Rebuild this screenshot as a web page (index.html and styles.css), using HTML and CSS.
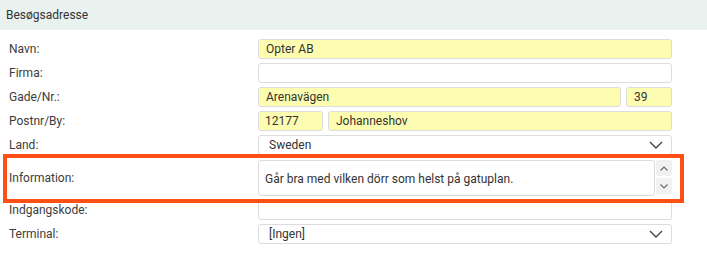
FILE: index.html
```html
<!DOCTYPE html>
<html lang="da">
<head>
    <meta charset="UTF-8">
    <title>Besøgsadresse</title>
    <link rel="stylesheet" href="styles.css">
</head>
<body>
    <div class="panel">
        <div class="panel-head">Besøgsadresse</div>
        <div class="form">
            <div class="row">
                <label>Navn:</label>
                <div class="field filled">Opter AB</div>
            </div>
            <div class="row">
                <label>Firma:</label>
                <div class="field"></div>
            </div>
            <div class="row">
                <label>Gade/Nr.:</label>
                <div class="pair">
                    <div class="field filled">Arenavägen</div>
                    <div class="field filled nr">39</div>
                </div>
            </div>
            <div class="row">
                <label>Postnr/By:</label>
                <div class="pair zip">
                    <div class="field filled">12177</div>
                    <div class="field filled">Johanneshov</div>
                </div>
            </div>
            <div class="row">
                <label>Land:</label>
                <div class="field select">
                    <span>Sweden</span>
                    <svg width="14" height="8" viewBox="0 0 14 8"><path d="M1 1l6 6 6-6" fill="none" stroke="#444" stroke-width="1.4"/></svg>
                </div>
            </div>
            <div class="row info">
                <label>Information:</label>
                <div class="memo">
                    <div class="memo-text">Går bra med vilken dörr som helst på gatuplan.</div>
                    <div class="spin">
                        <div class="spin-btn"><svg width="8" height="5" viewBox="0 0 8 5"><path d="M0.5 4.5l3.5-3.5 3.5 3.5" fill="none" stroke="#666" stroke-width="1.1"/></svg></div>
                        <div class="spin-btn"><svg width="8" height="5" viewBox="0 0 8 5"><path d="M0.5 0.5l3.5 3.5 3.5-3.5" fill="none" stroke="#666" stroke-width="1.1"/></svg></div>
                    </div>
                </div>
                <div class="highlight"></div>
            </div>
            <div class="row">
                <label>Indgangskode:</label>
                <div class="field"></div>
            </div>
            <div class="row">
                <label>Terminal:</label>
                <div class="field select">
                    <span>[Ingen]</span>
                    <svg width="14" height="8" viewBox="0 0 14 8"><path d="M1 1l6 6 6-6" fill="none" stroke="#444" stroke-width="1.4"/></svg>
                </div>
            </div>
        </div>
    </div>
</body>
</html>
```

FILE: styles.css
```css
body {
    margin: 0;
    background: #fff;
    font-family: Roboto, "Liberation Sans", sans-serif;
    font-size: 12px;
    color: #3a3a3a;
}

div.panel div.panel-head {
    height: 30px;
    line-height: 31px;
    padding-left: 6px;
    background-color: #e9f2ef;
    color: #333;
}

div.panel div.form {
    padding: 9px 0 0 9px;
    display: flex;
    flex-direction: column;
    gap: 4px;
}

div.form div.row {
    display: grid;
    grid-template-columns: 249px 414px;
    align-items: center;
    height: 20px;
}

div.form div.row label {
    color: #3c3c3c;
}

div.form div.field {
    box-sizing: border-box;
    height: 20px;
    line-height: 19px;
    padding: 0 7px;
    border: 1px solid #dcdcdc;
    border-radius: 3px;
    background: #fff;
    color: #333;
    white-space: nowrap;
}

div.form div.field.filled {
    background-color: #fdfdb1;
}

div.form div.pair {
    display: grid;
    grid-template-columns: 1fr 46px;
    gap: 5px;
}

div.form div.pair.zip {
    grid-template-columns: 65px 1fr;
}

div.form div.pair.zip .field:first-child {
    padding-left: 6px;
}

div.form div.field.select {
    display: flex;
    align-items: center;
    justify-content: space-between;
    padding: 0 8px 0 10px;
}

/* information med ramme */
div.form div.row.info {
    position: relative;
    height: 37px;
}

div.row.info div.memo {
    display: flex;
    height: 37px;
    padding-top: 1px;
    box-sizing: border-box;
}

div.row.info div.memo-text {
    flex: 1;
    box-sizing: border-box;
    height: 36px;
    padding: 0 6px;
    line-height: 36px;
    border: 1px solid #dcdcdc;
    border-radius: 3px;
    color: #333;
}

div.row.info div.spin {
    width: 16px;
    margin-left: 1px;
    display: flex;
    flex-direction: column;
    gap: 2px;
}

div.row.info div.spin-btn {
    height: 16px;
    background: #f1f1f1;
    border-radius: 2px;
    display: flex;
    align-items: center;
    justify-content: center;
}

div.row.info div.highlight {
    position: absolute;
    left: -6px;
    top: -5px;
    width: 673px;
    height: 41px;
    border: 4px solid #fc5014;
    pointer-events: none;
}
```
